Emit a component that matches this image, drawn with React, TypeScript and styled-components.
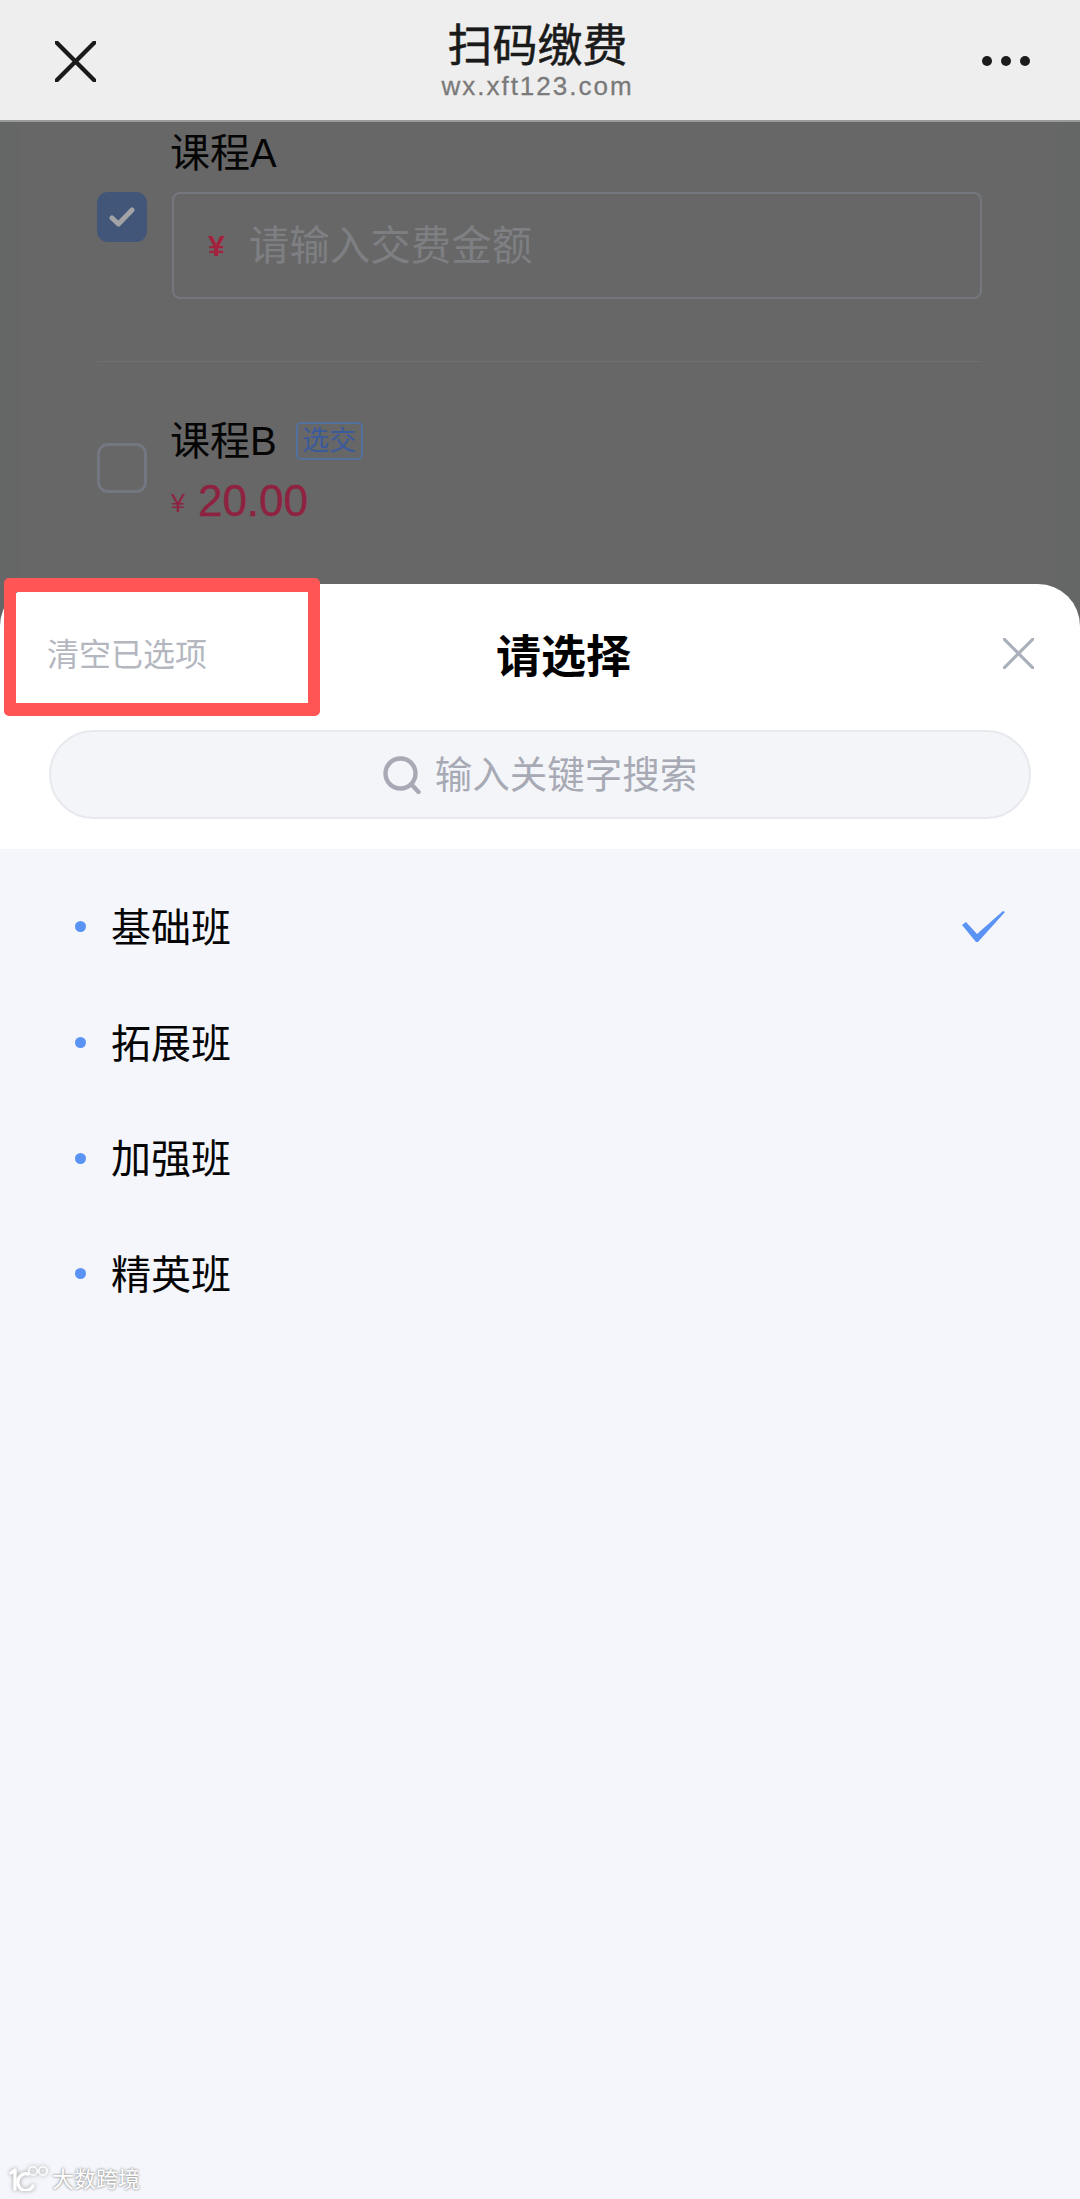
import React from 'react';
import styled, { createGlobalStyle } from 'styled-components';

const GlobalStyle = createGlobalStyle`
  html, body {
    margin: 0;
    padding: 0;
    background: #f4f6fb;
  }
  * {
    box-sizing: border-box;
  }
  body {
    font-family: "Liberation Sans", "Noto Sans CJK SC", sans-serif;
  }
`;

const Screen = styled.div`
  position: relative;
  width: 1080px;
  height: 2199px;
  overflow: hidden;
  display: flex;
  flex-direction: column;
  background: #656766;
`;

const NavBar = styled.header`
  height: 122px;
  flex-shrink: 0;
  display: flex;
  align-items: center;
  justify-content: space-between;
  padding: 2px 50px 0 55px;
  background: #eeeeee;
  border-bottom: 2px solid #9a9a9a;
`;

const NavTitles = styled.div`
  display: flex;
  flex-direction: column;
  align-items: center;
  margin-left: -3px;
  margin-top: -2px;
`;

const NavTitle = styled.div`
  font-size: 45px;
  line-height: 52px;
  color: #1a1a1a;
  -webkit-text-stroke: 0.5px #1a1a1a;
`;

const NavUrl = styled.div`
  font-size: 26px;
  line-height: 27px;
  letter-spacing: 2px;
  color: #7a7a7a;
  -webkit-text-stroke: 0.3px #7a7a7a;
`;

const Dots = styled.div`
  display: flex;
  gap: 9px;
`;

const Dot = styled.span`
  width: 10px;
  height: 10px;
  border-radius: 50%;
  background: #1c1c1c;
`;

const Backdrop = styled.section`
  height: 462px;
  flex-shrink: 0;
  padding: 0 22px 0 20px;
  overflow: hidden;
`;

const FormCard = styled.div`
  height: 100%;
  padding: 7px 76px 0 77px;
  background: #676767;
`;

const CourseRow = styled.div`
  display: flex;
  align-items: center;
  gap: 25px;
`;

const CourseBody = styled.div<{ $gap: number }>`
  flex: 1;
  display: flex;
  flex-direction: column;
  gap: ${p => p.$gap}px;
`;

const CourseName = styled.div`
  display: flex;
  align-items: center;
  gap: 19px;
  margin-left: -2px;
  font-size: 40px;
  line-height: 48px;
  color: #050505;
`;

const Tag = styled.span`
  width: 67px;
  height: 38px;
  display: flex;
  align-items: center;
  justify-content: center;
  font-size: 27px;
  line-height: 1;
  color: #3a5a9c;
  border: 2px solid #54709f;
  border-radius: 5px;
`;

const CheckBox = styled.span<{ $checked?: boolean }>`
  width: 50px;
  height: 50px;
  flex-shrink: 0;
  display: flex;
  align-items: center;
  justify-content: center;
  border-radius: 11px;
  background: ${p => (p.$checked ? '#415678' : 'transparent')};
  border: ${p => (p.$checked ? 'none' : '3px solid #737781')};
  margin-top: ${p => (p.$checked ? '6px' : '-6px')};
`;

const AmountInput = styled.div`
  height: 107px;
  display: flex;
  align-items: center;
  gap: 24px;
  padding: 0 0 0 34px;
  border: 2px solid #74777e;
  border-radius: 8px;
`;

const InputYen = styled.span`
  font-size: 30px;
  font-weight: 700;
  color: #a3233f;
`;

const Placeholder = styled.span`
  margin-top: -6px;
  font-size: 40.5px;
  color: #7e7f82;
`;

const Divider = styled.div`
  height: 1px;
  margin: 62px 0 55px;
  background: #6f6f6f;
`;

const Price = styled.div`
  display: flex;
  align-items: center;
  gap: 13px;
  height: 46px;
  margin-left: -1px;
  color: #8e2240;
`;

const PriceYen = styled.span`
  font-size: 25px;
  padding-top: 5px;
`;

const PriceValue = styled.span`
  font-size: 44px;
  -webkit-text-stroke: 0.4px #8e2240;
`;

const Sheet = styled.section`
  flex: 1;
  display: flex;
  flex-direction: column;
  border-radius: 42px 42px 0 0;
  overflow: hidden;
  background: #ffffff;
`;

const SheetHeader = styled.div`
  height: 146px;
  flex-shrink: 0;
  display: grid;
  grid-template-columns: 1fr auto 1fr;
  align-items: center;
  padding: 0 46px 8px 47px;
`;

const ClearButton = styled.div`
  margin-top: -2px;
  font-size: 32px;
  color: #b4b7c0;
`;

const SheetTitle = styled.div`
  font-size: 45px;
  font-weight: 700;
  color: #000000;
  margin-left: 46px;
`;

const CloseWrap = styled.div`
  display: flex;
  justify-content: flex-end;
`;

const SearchWrap = styled.div`
  height: 119px;
  flex-shrink: 0;
  padding: 0 49px;
`;

const SearchBar = styled.div`
  height: 89px;
  display: flex;
  align-items: center;
  justify-content: center;
  gap: 14px;
  background: #f4f5f9;
  border: 2px solid #e8e9ee;
  border-radius: 45px;
`;

const SearchText = styled.span`
  margin-top: -6px;
  font-size: 37.5px;
  color: #a7aab4;
`;

const OptionList = styled.ul`
  flex: 1;
  margin: 0;
  padding: 18px 0 0;
  list-style: none;
  background: #f4f6fb;
`;

const OptionRow = styled.li`
  height: 115.7px;
  display: flex;
  align-items: center;
  gap: 25px;
  padding: 0 75px;
  font-size: 40px;
  color: #050505;
`;

const Bullet = styled.span`
  width: 11px;
  height: 11px;
  margin-top: 4px;
  border-radius: 50%;
  background: #5b93f5;
`;

const OptionName = styled.span`
  flex: 1;
`;

const OptionCheck = styled.svg`
  margin-top: 4px;
`;

// the red annotation frame laid over the screenshot
const Annotation = styled.div`
  position: absolute;
  left: 4px;
  top: 578px;
  width: 316px;
  height: 138px;
  border: solid #ff5555;
  border-width: 14px 12px 13px 12px;
  border-radius: 5px;
`;

const Watermark = styled.div`
  position: absolute;
  left: 9px;
  bottom: 8px;
  display: flex;
  align-items: flex-end;
  gap: 1px;
  font-size: 22px;
  line-height: 26px;
  color: #ffffff;
  text-shadow: 0 0 3px #9a9a9a, 0 0 2px #9a9a9a;
`;

const WatermarkText = styled.span`
  margin-bottom: -2px;
`;

const WatermarkLogo = styled.svg`
  filter: drop-shadow(0 0 2px #9a9a9a);
`;

const CloseIcon: React.FC<{ size: number; color: string; width: number }> = ({ size, color, width }) => (
  <svg width={size} height={size} viewBox="0 0 40 40" fill="none">
    <path d="M1.5 1.5 L38.5 38.5 M38.5 1.5 L1.5 38.5" stroke={color} strokeWidth={width} strokeLinecap="round" />
  </svg>
);

const options = ['基础班', '拓展班', '加强班', '精英班'];

const App: React.FC = () => (
  <Screen>
    <GlobalStyle />
    <NavBar>
      <CloseIcon size={41} color="#1a1a1a" width={4.2} />
      <NavTitles>
        <NavTitle>扫码缴费</NavTitle>
        <NavUrl>wx.xft123.com</NavUrl>
      </NavTitles>
      <Dots>
        <Dot />
        <Dot />
        <Dot />
      </Dots>
    </NavBar>

    <Backdrop>
      <FormCard>
        <CourseRow>
          <CheckBox $checked>
            <svg width="26" height="20" viewBox="0 0 26 20" fill="none">
              <path d="M3 11 L9.5 17 L23 3" stroke="#a3a3a6" strokeWidth="5" strokeLinecap="round" strokeLinejoin="round" />
            </svg>
          </CheckBox>
          <CourseBody $gap={15}>
            <CourseName>课程A</CourseName>
            <AmountInput>
              <InputYen>¥</InputYen>
              <Placeholder>请输入交费金额</Placeholder>
            </AmountInput>
          </CourseBody>
        </CourseRow>
        <Divider />
        <CourseRow>
          <CheckBox />
          <CourseBody $gap={13}>
            <CourseName>
              课程B
              <Tag>选交</Tag>
            </CourseName>
            <Price>
              <PriceYen>¥</PriceYen>
              <PriceValue>20.00</PriceValue>
            </Price>
          </CourseBody>
        </CourseRow>
      </FormCard>
    </Backdrop>

    <Sheet>
      <SheetHeader>
        <ClearButton>清空已选项</ClearButton>
        <SheetTitle>请选择</SheetTitle>
        <CloseWrap>
          <CloseIcon size={31} color="#a9afbb" width={4} />
        </CloseWrap>
      </SheetHeader>
      <SearchWrap>
        <SearchBar>
          <svg width="38" height="38" viewBox="0 0 38 38" fill="none">
            <circle cx="17.5" cy="17.5" r="15" stroke="#a7aab4" strokeWidth="4.4" />
            <path d="M29 29 L35.5 36" stroke="#a7aab4" strokeWidth="4.4" strokeLinecap="round" />
          </svg>
          <SearchText>输入关键字搜索</SearchText>
        </SearchBar>
      </SearchWrap>
      <OptionList>
        {options.map((name, i) => (
          <OptionRow key={name}>
            <Bullet />
            <OptionName>{name}</OptionName>
            {i === 0 && (
              <OptionCheck width="43" height="31" viewBox="0 0 43 31">
                <path d="M0 14 L4 11 L15 23 L41 0 L43 1 L16 31 L14 31 Z" fill="#5b93f5" />
              </OptionCheck>
            )}
          </OptionRow>
        ))}
      </OptionList>
    </Sheet>

    <Annotation />

    <Watermark>
      <WatermarkLogo width="42" height="26" viewBox="0 0 42 26" fill="none">
        <path d="M2 8 L6 5 L6 24" stroke="#ffffff" strokeWidth="3.4" strokeLinecap="round" strokeLinejoin="round" />
        <path d="M19 9 A8 8.5 0 1 0 24 21" stroke="#ffffff" strokeWidth="3.4" strokeLinecap="round" />
        <circle cx="24" cy="6" r="4.2" stroke="#ffffff" strokeWidth="1.6" />
        <circle cx="34" cy="6" r="4.2" stroke="#ffffff" strokeWidth="1.6" />
      </WatermarkLogo>
      <WatermarkText>大数跨境</WatermarkText>
    </Watermark>
  </Screen>
);

export default App;
